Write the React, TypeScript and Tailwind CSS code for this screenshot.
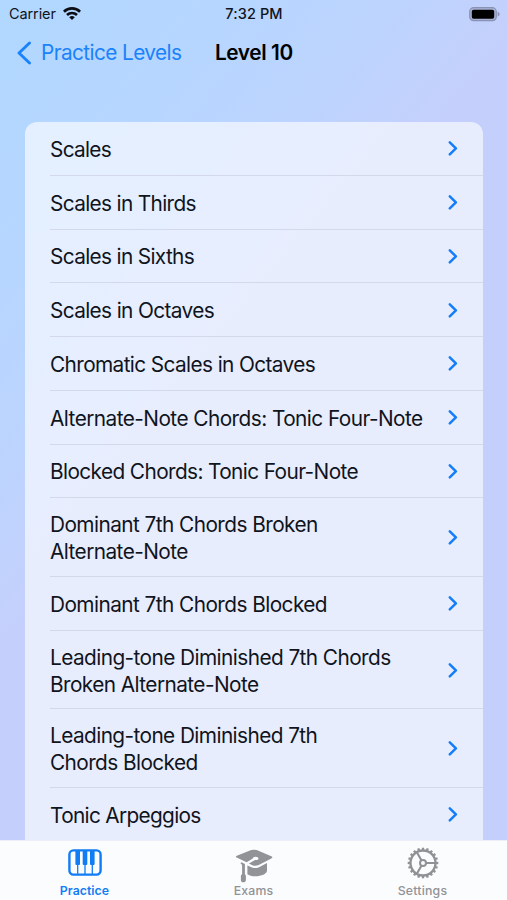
import React from "react";

type Row = { lines: string[]; tracking: string };

const rows: Row[] = [
  { lines: ["Scales"], tracking: "tracking-[-0.7px]" },
  { lines: ["Scales in Thirds"], tracking: "tracking-[-0.65px]" },
  { lines: ["Scales in Sixths"], tracking: "tracking-[-0.65px]" },
  { lines: ["Scales in Octaves"], tracking: "tracking-[-0.63px]" },
  { lines: ["Chromatic Scales in Octaves"], tracking: "tracking-[-0.61px]" },
  { lines: ["Alternate-Note Chords: Tonic Four-Note"], tracking: "tracking-[-0.55px]" },
  { lines: ["Blocked Chords: Tonic Four-Note"], tracking: "tracking-[-0.6px]" },
  { lines: ["Dominant 7th Chords Broken", "Alternate-Note"], tracking: "tracking-[-0.56px]" },
  { lines: ["Dominant 7th Chords Blocked"], tracking: "tracking-[-0.56px]" },
  { lines: ["Leading-tone Diminished 7th Chords", "Broken Alternate-Note"], tracking: "tracking-[-0.57px]" },
  { lines: ["Leading-tone Diminished 7th", "Chords Blocked"], tracking: "tracking-[-0.58px]" },
  { lines: ["Tonic Arpeggios"], tracking: "tracking-[-0.67px]" },
];

function Chevron() {
  return (
    <svg width="10" height="16" viewBox="0 0 10 16" fill="none" stroke="#137ef8" strokeWidth="2.500" strokeLinecap="round" strokeLinejoin="round">
      <path d="M1.800 2.300 7.900 8.300l-6.100 6" />
    </svg>
  );
}

function Wifi() {
  return (
    <svg width="18" height="14" viewBox="0 0 18 14" fill="none" stroke="#0b0e14" strokeWidth="2.700">
      <path d="M.9 4.700a11.500 11.500 0 0 1 16.200 0" />
      <path d="M4 8a7.200 7.200 0 0 1 10 0" />
      <path d="M9 13.100 6.200 10.300a4 4 0 0 1 5.600 0Z" fill="#0b0e14" stroke="none" />
    </svg>
  );
}

function Battery() {
  return (
    <svg width="31" height="15" viewBox="0 0 31 15">
      <rect x=".7" y=".7" width="26.600" height="13" rx="4" fill="#a9b2d6" stroke="#8892b4" strokeWidth="1.200" />
      <rect x="2.800" y="2.700" width="22.400" height="9" rx="1.800" fill="#000" />
      <path d="M28.600 4.800c1.300.3 2 1.300 2 2.400s-.7 2.100-2 2.400Z" fill="#8f94bd" />
    </svg>
  );
}

function Piano() {
  return (
    <svg width="34" height="27" viewBox="0 0 34 27">
      <rect x="1.400" y="1.400" width="31.200" height="24.200" rx="4" fill="none" stroke="#127cf5" strokeWidth="2.400" />
      <path d="M9.700 15v10M17 15v10M24.300 15v10" stroke="#127cf5" strokeWidth="1.300" />
      <path d="M7.400 2h4.600v13a1 1 0 0 1-1 1H8.400a1 1 0 0 1-1-1ZM14.700 2h4.600v13a1 1 0 0 1-1 1h-2.600a1 1 0 0 1-1-1ZM22 2h4.600v13a1 1 0 0 1-1 1H23a1 1 0 0 1-1-1Z" fill="#127cf5" />
    </svg>
  );
}

function GradCap() {
  return (
    <svg width="38" height="34" viewBox="0 0 38 34" fill="#919396">
      <path d="M16.300 1.100q2.700-.9 5.400 0l14.600 6.200q2.200 1 0 2.200l-12.600 6.400q-3.200 1.500-6.400.3l-3.400-1.700 6.200-3.500c2 .2 3.400-.4 3.400-1.500 0-1-1.300-1.700-2.900-1.700-1.700 0-2.800.7-2.800 1.800l-6.200 3.700-9.900-4.700q-1.700-1 .1-1.800Z" />
      <path d="M12.400 16.500 17 18.600q3.500 1.200 7-.4l8-4.100v7.400c0 3.400-5.500 5.800-11.800 5.800-3.400 0-6-.9-7.800-2.100Z" />
      <path d="M6.500 13.200 9.900 15v10.200c.8.600 1 1.200 1 2v3.700c0 1.500-1.100 2.400-2.600 2.400S5.900 32.400 5.900 31v-3.800c0-.9.300-1.500 1.200-2v-8.400q-.1-1.600-1.700-2.500Z" />
    </svg>
  );
}

const teeth = Array.from({ length: 20 }, (_, i) => i * 18);

function Gear() {
  return (
    <svg width="32" height="32" viewBox="-16 -16 32 32" fill="none" stroke="#8f9194">
      <circle r="12.500" strokeWidth="2.300" />
      {teeth.map((a) => (
        <path key={a} d="M13 0h2.300" strokeWidth="2.300" transform={`rotate(${a})`} />
      ))}
      <circle r="3" strokeWidth="2" />
      <path d="M3.400 0h9M-1.700-2.900-6.200-10.700M-1.700 2.900-6.200 10.700" strokeWidth="2.100" />
    </svg>
  );
}

export default function App() {
  return (
    <div className="flex h-[900px] w-[507px] flex-col overflow-hidden bg-[linear-gradient(130deg,#b1d8ff_0%,#b6d6ff_18%,#bcd4fe_31%,#c4d0fb_43%,#c4d0fb_100%)] font-['Inter','Liberation_Sans',sans-serif] text-[#10141c]">
      <header className="grid h-7 shrink-0 grid-cols-3 items-center pl-[9px] pr-[6px]">
        <div className="flex items-center gap-[7px] text-[14.500px] tracking-[-0.1px]">
          <span>Carrier</span>
          <Wifi />
        </div>
        <div className="pr-[2px] text-center text-[14.500px] font-medium tracking-[0.1px]">7:32 PM</div>
        <div className="flex justify-end pr-px">
          <Battery />
        </div>
      </header>

      <nav className="flex h-12 shrink-0 items-center pl-[17px] pt-[2px]">
        <button className="flex w-[198px] items-center gap-[10px] text-[#1a82fb]">
          <svg width="15" height="24" viewBox="0 0 15 24" fill="none" stroke="currentColor" strokeWidth="2.900" strokeLinecap="round" strokeLinejoin="round">
            <path d="M12.500 2 2 12l10.500 10" />
          </svg>
          <span className="-ml-px whitespace-nowrap text-[20.800px] tracking-[-0.6px]">Practice Levels</span>
        </button>
        <h1 className="whitespace-nowrap text-[20.800px] font-semibold tracking-[-0.400px] text-black">Level 10</h1>
      </nav>

      <main className="min-h-0 flex-1 overflow-hidden pl-[25px] pr-6 pt-[46px]">
        <ul className="rounded-t-[12px] bg-[#f8faff]/70 pl-[25px]">
          {rows.map((row) => (
            <li
              key={row.lines.join(" ")}
              className={`flex items-center justify-between border-b border-[#d3d9e9] pr-[25px] ${row.lines.length > 1 ? "h-[78.700px]" : "h-[53.750px]"}`}
            >
              <div className={`whitespace-nowrap pt-[2px] text-[20.800px] leading-[27px] ${row.tracking}`}>
                {row.lines.map((line) => (
                  <div key={line}>{line}</div>
                ))}
              </div>
              <Chevron />
            </li>
          ))}
        </ul>
      </main>

      <footer className="grid h-[60px] shrink-0 grid-cols-3 border-t border-[#eceffa] bg-[#fbfcfe] text-[12.300px] font-medium text-[#919396]">
        <div className="flex flex-col items-center text-[#127cf5]">
          <div className="flex h-[43px] items-center"><Piano /></div>
          <span className="leading-[14px] font-semibold tracking-[0.05px]">Practice</span>
        </div>
        <div className="flex flex-col items-center">
          <div className="flex h-[43px] items-center pt-[6px]"><GradCap /></div>
          <span className="leading-[14px] tracking-[0.15px]">Exams</span>
        </div>
        <div className="flex flex-col items-center">
          <div className="flex h-[43px] items-center"><Gear /></div>
          <span className="leading-[14px] tracking-[0.2px]">Settings</span>
        </div>
      </footer>
    </div>
  );
}
